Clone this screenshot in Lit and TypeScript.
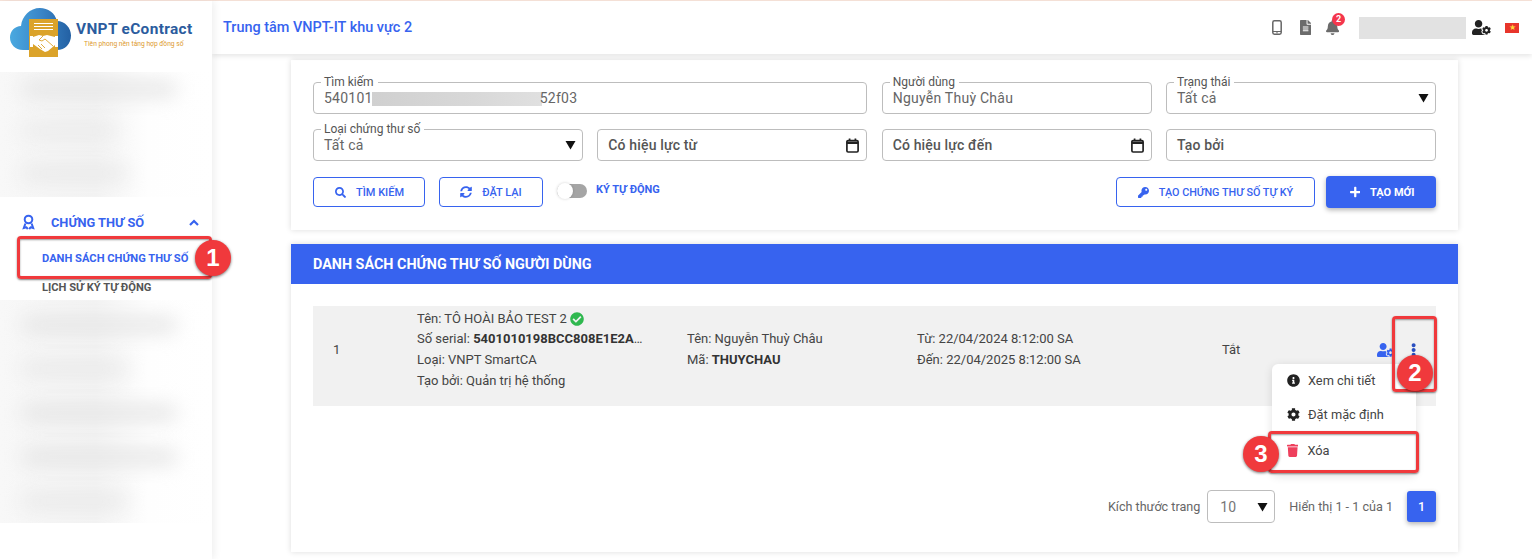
import { LitElement, html, css, svg } from "lit";
import { customElement } from "lit/decorators.js";

const P: Record<string, [number, string]> = {
  search: [512, "M505 442.7L405.3 343c-4.5-4.5-10.6-7-17-7H372c27.6-35.3 44-79.7 44-128C416 93.1 322.9 0 208 0S0 93.1 0 208s93.1 208 208 208c48.3 0 92.7-16.4 128-44v16.3c0 6.4 2.5 12.5 7 17l99.7 99.7c9.4 9.4 24.6 9.4 33.9 0l28.3-28.3c9.4-9.4 9.4-24.6.1-34zM208 336c-70.7 0-128-57.2-128-128 0-70.7 57.2-128 128-128 70.7 0 128 57.2 128 128 0 70.7-57.2 128-128 128z"],
  plus: [448, "M416 208H272V64c0-17.67-14.33-32-32-32h-32c-17.67 0-32 14.33-32 32v144H32c-17.67 0-32 14.33-32 32v32c0 17.67 14.33 32 32 32h144v144c0 17.67 14.33 32 32 32h32c17.67 0 32-14.33 32-32V304h144c17.67 0 32-14.33 32-32v-32c0-17.67-14.33-32-32-32z"],
  check: [512, "M504 256c0 136.967-111.033 248-248 248S8 392.967 8 256 119.033 8 256 8s248 111.033 248 248zM227.314 387.314l184-184c6.248-6.248 6.248-16.379 0-22.627l-22.627-22.627c-6.248-6.249-16.379-6.249-22.628 0L216 308.118l-70.059-70.059c-6.248-6.248-16.379-6.248-22.628 0l-22.627 22.627c-6.248 6.248-6.248 16.379 0 22.627l104 104c6.249 6.249 16.379 6.249 22.628.001z"],
  info: [512, "M256 8C119.043 8 8 119.083 8 256c0 136.997 111.043 248 248 248s248-111.003 248-248C504 119.083 392.957 8 256 8zm0 110c23.196 0 42 18.804 42 42s-18.804 42-42 42-42-18.804-42-42 18.804-42 42-42zm56 254c0 6.627-5.373 12-12 12h-88c-6.627 0-12-5.373-12-12v-24c0-6.627 5.373-12 12-12h12v-64h-12c-6.627 0-12-5.373-12-12v-24c0-6.627 5.373-12 12-12h64c6.627 0 12 5.373 12 12v100h12c6.627 0 12 5.373 12 12v24z"],
  trash: [448, "M432 32H312l-9.4-18.7A24 24 0 0 0 281.1 0H166.8a23.72 23.72 0 0 0-21.4 13.3L136 32H16A16 16 0 0 0 0 48v32a16 16 0 0 0 16 16h416a16 16 0 0 0 16-16V48a16 16 0 0 0-16-16zM53.2 467a48 48 0 0 0 47.9 45h245.8a48 48 0 0 0 47.9-45L416 128H32z"],
  dots: [192, "M96 184c39.8 0 72 32.2 72 72s-32.2 72-72 72-72-32.2-72-72 32.2-72 72-72zM24 80c0 39.8 32.2 72 72 72s72-32.2 72-72S135.8 8 96 8 24 40.2 24 80zm0 352c0 39.8 32.2 72 72 72s72-32.2 72-72-32.2-72-72-72-72 32.2-72 72z"],
  cog: [512, "M487.4 315.7l-42.6-24.6c4.3-23.2 4.3-47 0-70.2l42.6-24.6c4.9-2.8 7.1-8.6 5.5-14-11.1-35.6-30-67.8-54.7-94.6-3.8-4.1-10-5.1-14.8-2.3L380.8 110c-17.9-15.4-38.5-27.3-60.8-35.1V25.8c0-5.6-3.9-10.5-9.4-11.7-36.7-8.2-74.3-7.8-109.2 0-5.5 1.2-9.4 6.1-9.4 11.7V75c-22.2 7.9-42.8 19.8-60.8 35.1L88.7 85.5c-4.9-2.8-11-1.9-14.8 2.3-24.7 26.7-43.6 58.9-54.7 94.6-1.7 5.4.6 11.2 5.5 14L67.3 221c-4.3 23.2-4.3 47 0 70.2l-42.6 24.6c-4.9 2.8-7.1 8.6-5.5 14 11.1 35.6 30 67.8 54.7 94.6 3.8 4.1 10 5.1 14.8 2.3l42.6-24.6c17.9 15.4 38.5 27.3 60.8 35.1v49.2c0 5.6 3.9 10.5 9.4 11.7 36.7 8.2 74.3 7.8 109.2 0 5.5-1.2 9.4-6.1 9.4-11.7v-49.2c22.2-7.9 42.8-19.8 60.8-35.1l42.6 24.6c4.9 2.8 11 1.9 14.8-2.3 24.7-26.7 43.6-58.9 54.7-94.6 1.5-5.5-.7-11.3-5.6-14.1zM256 336c-44.1 0-80-35.9-80-80s35.9-80 80-80 80 35.9 80 80-35.9 80-80 80z"],
  sync: [512, "M370.72 133.28C339.458 104.008 298.888 87.962 255.848 88c-77.458.068-144.328 53.178-162.791 126.85-1.344 5.363-6.122 9.15-11.651 9.15H24.103c-7.498 0-13.194-6.807-11.807-14.176C33.933 94.924 134.813 8 256 8c66.448 0 126.791 26.136 171.315 68.685L463.03 40.97C478.149 25.851 504 36.559 504 57.941V192c0 13.255-10.745 24-24 24H345.941c-21.382 0-32.09-25.851-16.971-40.971l41.75-41.749zM32 296h134.059c21.382 0 32.09 25.851 16.971 40.971l-41.75 41.75c31.262 29.273 71.835 45.319 114.876 45.28 77.418-.07 144.315-53.144 162.787-126.849 1.344-5.363 6.122-9.15 11.651-9.15h57.304c7.498 0 13.194 6.807 11.807 14.176C478.067 417.076 377.187 504 256 504c-66.448 0-126.791-26.136-171.315-68.685L48.97 471.03C33.851 486.149 8 475.441 8 454.059V320c0-13.255 10.745-24 24-24z"],
  key: [512, "M512 176.001C512 273.203 433.202 352 336 352c-11.22 0-22.19-1.062-32.827-3.069l-24.012 27.014A23.999 23.999 0 0 1 261.223 384H224v40c0 13.255-10.745 24-24 24h-40v40c0 13.255-10.745 24-24 24H24c-13.255 0-24-10.745-24-24v-78.059c0-6.365 2.529-12.47 7.029-16.971l161.802-161.802C163.108 213.814 160 195.271 160 176 160 78.798 238.797.001 335.999 0 433.488-.001 512 78.511 512 176.001zM336 128c0 26.51 21.49 48 48 48s48-21.49 48-48-21.49-48-48-48-48 21.49-48 48z"],
  usercog: [640, "M610.5 373.3c2.6-14.1 2.6-28.5 0-42.6l25.8-14.9c3-1.7 4.3-5.2 3.3-8.5-6.7-21.5-18.2-41-33.2-57.1-2.3-2.5-6-3.1-9-1.4l-25.8 14.9c-10.9-9.3-23.4-16.5-36.9-21.3v-29.8c0-3.4-2.4-6.4-5.7-7.1-22.3-5-45-4.8-66.2 0-3.3.7-5.7 3.7-5.7 7.1v29.8c-13.5 4.8-26 12-36.9 21.3l-25.8-14.9c-2.9-1.7-6.7-1.1-9 1.4-15 16.1-26.5 35.6-33.2 57.1-1 3.3.4 6.8 3.3 8.5l25.8 14.9c-2.6 14.1-2.6 28.5 0 42.6l-25.8 14.9c-3 1.7-4.3 5.2-3.3 8.5 6.7 21.5 18.2 41 33.2 57.1 2.3 2.5 6 3.1 9 1.4l25.8-14.9c10.9 9.3 23.4 16.5 36.9 21.3v29.8c0 3.4 2.4 6.4 5.7 7.1 22.3 5 45 4.8 66.2 0 3.3-.7 5.7-3.7 5.7-7.1v-29.8c13.5-4.8 26-12 36.9-21.3l25.8 14.9c2.9 1.7 6.7 1.1 9-1.4 15-16.1 26.5-35.6 33.2-57.1 1-3.3-.4-6.8-3.3-8.5l-25.8-14.9zM496 400.5c-26.8 0-48.5-21.8-48.5-48.5s21.8-48.5 48.5-48.5 48.5 21.8 48.5 48.5-21.7 48.5-48.5 48.5zM224 256c70.7 0 128-57.3 128-128S294.7 0 224 0 96 57.3 96 128s57.3 128 128 128zm201.2 226.5c-2.3 0-4.6-.7-6.6-1.9l-7.9 4.6c-6 3.4-12.8 5.3-19.6 5.3-10.9 0-21.4-4.6-28.9-12.6-18.3-19.8-32.3-43.9-40.2-69.6-5.5-17.7 1.9-36.4 17.9-45.7l7.9-4.6c-.1-2.6-.1-5.2 0-7.8l-7.9-4.6c-16-9.2-23.4-28-17.9-45.7.9-2.9 2.2-5.8 3.2-8.7-3.8-.3-7.5-1.2-11.4-1.2h-16.7c-22.2 10.2-46.9 16-72.9 16s-50.6-5.8-72.9-16h-16.7C60.2 288 0 348.2 0 422.4V464c0 26.5 21.5 48 48 48h352c10.1 0 19.5-3.2 27.2-8.5-1.2-3.8-2-7.7-2-11.8v-9.2z"],
  bell: [448, "M224 512c35.32 0 63.97-28.65 63.97-64H160.03c0 35.35 28.65 64 63.97 64zm215.39-149.71c-19.32-20.76-55.47-51.99-55.47-154.29 0-77.7-54.48-139.9-127.94-155.16V32c0-17.67-14.32-32-31.98-32s-31.98 14.33-31.98 32v20.84C118.56 68.1 64.08 130.3 64.08 208c0 102.3-36.15 133.53-55.47 154.29-6 6.45-8.66 14.16-8.61 21.71.11 16.4 12.98 32 32.1 32h383.8c19.12 0 32-15.6 32.1-32 .05-7.55-2.61-15.27-8.61-21.71z"],
  file: [384, "M224 136V0H24C10.7 0 0 10.7 0 24v464c0 13.3 10.7 24 24 24h336c13.3 0 24-10.7 24-24V160H248c-13.2 0-24-10.8-24-24zm64 236c0 6.6-5.4 12-12 12H108c-6.6 0-12-5.4-12-12v-8c0-6.6 5.4-12 12-12h168c6.6 0 12 5.4 12 12v8zm0-64c0 6.6-5.4 12-12 12H108c-6.6 0-12-5.4-12-12v-8c0-6.6 5.4-12 12-12h168c6.6 0 12 5.4 12 12v8zm0-72v8c0 6.6-5.4 12-12 12H108c-6.6 0-12-5.4-12-12v-8c0-6.6 5.4-12 12-12h168c6.6 0 12 5.4 12 12zm96-114.1v6.1H256V0h6.1c6.4 0 12.5 2.5 17 7l97.9 98c4.5 4.5 7 10.6 7 16.9z"],
};

const ic = (name: string, size: number, color: string) => {
  const [w, d] = P[name];
  return html`<svg class="ic" width=${(size * w) / 512} height=${size} viewBox="0 0 ${w} 512" fill=${color}>${svg`<path d=${d}></path>`}</svg>`;
};

const caret = html`<svg class="caret" width="11" height="10" viewBox="0 0 11 10"><path d="M0.5 1h10L5.5 9.5z" fill="#111"></path></svg>`;
const cal = html`<svg class="cal" width="13" height="15" viewBox="0 0 13 15" fill="none" stroke="#222" stroke-width="1.7"><rect x=".9" y="2.6" width="11.2" height="11.4" rx="1.2"></rect><path d="M.9 4.8h11.2" stroke-width="2.4"></path><path d="M3.6.4v2.6M9.4.4v2.6"></path></svg>`;

const logo = html`<svg class="logo" width="62" height="52" viewBox="0 0 62 52">
  <defs><linearGradient id="cl" x1="0" x2="1" y1="0" y2="0"><stop offset="0" stop-color="#4aa9e0"></stop><stop offset=".5" stop-color="#3a86c8"></stop><stop offset="1" stop-color="#2360a3"></stop></linearGradient></defs>
  <path d="M13 42C5 42 0 36 0 29.5 0 23 5 18 11 18 12 8 20 0 30 0c8 0 15 5 17 13 8 0 14 7 14 14.5C61 36 55 42 47 42z" fill="url(#cl)"></path>
  <rect x="19" y="11" width="29" height="38" fill="#dba32a"></rect>
  <path d="M24 15.5h19M24 18.5h19M24 21.5h19" stroke="#fff" stroke-width="1"></path>
  <path d="M20 28h3v11h-3zM45 28h3v11h-3z" fill="#fff"></path>
  <path d="M23 29l6-2 4 1 4-1 8 2v8l-7 6-3 1-5-3-7-5z" fill="#fff"></path>
  <path d="M33 28l-4 4 3 1 3-2 8 7M31 36l4 4M28 37l4 4" stroke="#dba32a" stroke-width=".9" fill="none"></path>
</svg>`;

@customElement("app-root")
export class AppRoot extends LitElement {
  static styles = css`
    :host { display: block; width: 1532px; height: 559px; position: relative; overflow: hidden; background: #fff; font-family: Roboto, "Noto Sans", sans-serif; color: #444; }
    * { box-sizing: border-box; }
    .ic { display: block; flex: none; }
    .strip { height: 1px; background: #f8e4da; }
    .page { display: flex; height: 558px; }

    .side { width: 212px; flex: none; display: flex; flex-direction: column; box-shadow: 2px 0 8px rgba(0,0,0,.07); position: relative; z-index: 2; background: #fff; }
    .brand { height: 71px; display: flex; gap: 4px; padding: 7px 0 0 10px; }
    .brand-text { padding-top: 13px; }
    .brand-name { font-size: 15.4px; font-weight: 700; letter-spacing: .35px; color: #2b5c9e; line-height: 16px; white-space: nowrap; }
    .brand-tag { font-size: 6.7px; color: #dd9a2e; line-height: 9px; margin: 3px 0 0 8px; white-space: nowrap; }
    .blur { overflow: hidden; display: flex; flex-direction: column; flex: none; background: linear-gradient(90deg, #f8f8f8, #f4f4f4 45%, #fefefe 70%, #fff); }
    .blur-a { height: 125px; padding-top: 10px; gap: 28px; }
    .blur-b { height: 223px; padding-top: 18px; gap: 30px; }
    .smudge { height: 14px; flex: none; border-radius: 7px; background: #e2e2e2; filter: blur(10px); margin-left: 22px; }
    .s-a { width: 155px; }
    .s-b { width: 95px; background: #e9e9e9; }
    .s-c { width: 105px; background: #e7e7e7; }
    .menu-group { height: 103px; padding-top: 15px; background: #fff; flex: none; }
    .mg-head { display: flex; align-items: center; height: 20px; padding: 0 13px 0 22px; color: #3763ef; font-size: 12.8px; font-weight: 700; }
    .mg-head span { margin-left: 16px; flex: 1; }
    .sub { font-size: 11.15px; font-weight: 700; padding-left: 42px; white-space: nowrap; line-height: 14px; }
    .sub.on { color: #3763ef; margin-top: 20px; }
    .sub.off { color: #555; margin-top: 15px; }

    .main { flex: 1; min-width: 0; display: flex; flex-direction: column; }
    .top { height: 53px; flex: none; display: flex; align-items: center; padding: 0 13px 0 11px; background: #fff; box-shadow: 0 2px 5px rgba(0,0,0,.1); position: relative; z-index: 1; }
    .org { flex: 1; color: #3763ef; font-size: 14.45px; font-weight: 500; }
    .top-i { display: flex; align-items: center; }
    .phone { margin-right: 18px; }
    .bellwrap { position: relative; margin: 0 20px 0 15px; }
    .badge { position: absolute; left: 6px; top: -7px; width: 13px; height: 13px; border-radius: 50%; background: #f4364c; color: #fff; font-size: 9px; font-weight: 700; text-align: center; line-height: 13px; }
    .who { width: 107px; height: 22px; background: #e2e2e2; margin-right: 6px; }
    .flag { width: 14px; height: 10px; background: #e8352b; margin-left: 14px; display: flex; align-items: center; justify-content: center; color: #ffd83a; font-size: 8px; line-height: 10px; }

    .content { flex: 1; padding: 6px 74px 0 79px; display: flex; flex-direction: column; gap: 14px; }
    .card { background: #fff; box-shadow: 0 0 6px rgba(0,0,0,.14); }
    .filter { height: 170px; padding: 22px 22px 0; }
    .grid { display: grid; grid-template-columns: repeat(4, 270px); column-gap: 14.33px; row-gap: 15px; }
    .f { height: 32px; border: 1px solid #bdbdbd; border-radius: 4px; position: relative; display: flex; align-items: center; padding: 0 6px 0 10px; font-size: 14px; letter-spacing: .25px; color: #666; justify-content: space-between; background: #fff; }
    .f.wide { grid-column: span 2; justify-content: flex-start; }
    .f.ph { font-weight: 500; letter-spacing: .15px; color: #555; padding-right: 7px; }
    .f label { position: absolute; left: 7px; top: -7px; font-size: 12px; line-height: 12px; letter-spacing: 0; color: #555; background: #fff; padding: 0 4px 0 3px; font-weight: 400; }
    .mask { display: inline-block; width: 170px; height: 14px; background: linear-gradient(90deg, #d0d0d0, #d8d8d8 60%, #e0e0e0); vertical-align: middle; margin: 0 -2px 0 -1px; }
    .acts { display: flex; align-items: flex-start; margin-top: 16px; gap: 14px; }
    .btn { height: 30px; border: 1px solid #3763ef; border-radius: 4px; background: #fff; color: #3763ef; display: flex; align-items: center; justify-content: center; gap: 10px; font-size: 11px; font-weight: 500; }
    .b1 { width: 112px; padding-left: 1px; }
    .b2 { width: 104px; }
    .b3 { width: 199px; margin-left: auto; font-size: 10.8px; }
    .b4 { width: 110px; height: 32px; margin: -1px 0 0 -3px; border: none; background: #3763ef; color: #fff; box-shadow: 0 2px 5px rgba(0,0,0,.3); padding-left: 2px; font-weight: 700; }
    .toggle { width: 30px; height: 14px; background: #a5a5a5; border-radius: 7px; margin-top: 7px; position: relative; }
    .knob { position: absolute; left: 0; top: -1px; width: 16px; height: 16px; border-radius: 50%; background: #fff; box-shadow: 0 0 3px rgba(0,0,0,.18); }
    .autos { color: #3763ef; font-size: 11px; font-weight: 700; margin: 7px 0 0 -5px; line-height: 12px; }

    .list { height: 308px; position: relative; }
    .list-head { height: 40px; background: #3763ef; color: #fff; font-size: 14.35px; font-weight: 700; display: flex; align-items: center; padding-left: 22px; }
    .list-body { padding: 22px 22px 0; }
    .row { height: 100px; background: #f1f1f1; display: grid; grid-template-columns: 104px 270px 230px 305px 1fr; align-items: center; font-size: 13px; color: #444; line-height: 20.7px; padding-bottom: 12px; }
    .row b { color: #333; font-weight: 700; }
    .idx { padding-left: 20px; }
    .name { display: flex; align-items: center; gap: 3px; }
    .serial { white-space: nowrap; }
    .state { display: flex; align-items: center; }
    .state span { flex: 1; }
    .row-ic { display: flex; align-items: center; gap: 16px; margin-right: 20px; }
    .pager { display: flex; align-items: center; justify-content: flex-end; margin-top: 84px; font-size: 12.6px; color: #666; }
    .psel { width: 68px; height: 33px; border: 1px solid #bdbdbd; border-radius: 4px; margin: 0 14px 0 7px; display: flex; align-items: center; justify-content: space-between; padding: 0 6px 0 12px; font-size: 14px; color: #777; }
    .pnum { width: 29px; height: 31px; background: #3763ef; color: #fff; border-radius: 3px; margin-left: 14px; display: flex; align-items: center; justify-content: center; font-weight: 500; box-shadow: 0 2px 5px rgba(0,0,0,.3); }

    .pop { position: absolute; left: 981px; top: 120px; width: 144px; height: 110px; background: #fff; border-radius: 6px; box-shadow: 0 2px 10px rgba(0,0,0,.12); font-size: 12.8px; color: #444; z-index: 3; }
    .pop-i { display: flex; align-items: center; gap: 8px; height: 34px; padding-left: 15px; }
    .pop-i:first-child { height: 33px; }
    .pop-i.del { height: 39px; gap: 9px; }

    .mark { position: absolute; border: 3px solid #f0393c; border-radius: 4px; box-shadow: 0 1px 2px rgba(0,0,0,.5), inset 0 1px 2px rgba(0,0,0,.4); z-index: 5; }
    .m1 { left: 17px; top: 236px; width: 195px; height: 43px; }
    .m2 { left: 1392px; top: 316px; width: 45px; height: 76px; }
    .m3 { left: 1268px; top: 431px; width: 151px; height: 42px; }
    .num { position: absolute; width: 36px; height: 36px; border-radius: 50%; background: #f0393c; color: #fff; font-size: 24px; font-family: "Liberation Sans", Arial, sans-serif; font-weight: 700; display: flex; align-items: center; justify-content: center; box-shadow: 0 1px 3px rgba(0,0,0,.55); z-index: 6; }
    .n1 { left: 195px; top: 240px; }
    .n2 { left: 1397px; top: 355px; }
    .n3 { left: 1243px; top: 436px; }
  `;

  render() {
    return html`
      <div class="strip"></div>
      <div class="page">
        <aside class="side">
          <div class="brand">
            ${logo}
            <div class="brand-text">
              <div class="brand-name">VNPT eContract</div>
              <div class="brand-tag">Tiên phong nền tảng hợp đồng số</div>
            </div>
          </div>
          <div class="blur blur-a"><div class="smudge s-a"></div><div class="smudge s-b"></div><div class="smudge s-c"></div></div>
          <div class="menu-group">
            <div class="mg-head">
              <svg width="13" height="16" viewBox="0 0 13 16" fill="none" stroke="#3763ef" stroke-width="2"><circle cx="6.5" cy="5.5" r="3.8"></circle><path d="M3.4 9.5L1.8 14l2.6-.6 1.4 1.6M9.6 9.5l1.6 4.5-2.6-.6L7.2 15"></path></svg>
              <span>CHỨNG THƯ SỐ</span>
              <svg width="10" height="7" viewBox="0 0 10 7" fill="none" stroke="#3763ef" stroke-width="2.2"><path d="M1 6l4-4 4 4"></path></svg>
            </div>
            <div class="sub on">DANH SÁCH CHỨNG THƯ SỐ</div>
            <div class="sub off">LỊCH SỬ KÝ TỰ ĐỘNG</div>
          </div>
          <div class="blur blur-b"><div class="smudge s-a"></div><div class="smudge s-c"></div><div class="smudge s-a"></div><div class="smudge s-a"></div><div class="smudge s-c"></div></div>
        </aside>

        <div class="main">
          <header class="top">
            <div class="org">Trung tâm VNPT-IT khu vực 2</div>
            <div class="top-i">
              <svg class="phone" width="10" height="15" viewBox="0 0 10 15" fill="none" stroke="#666" stroke-width="1.5"><rect x=".8" y=".8" width="8.4" height="13.4" rx="1.6"></rect><path d="M1 11.5h8" stroke-width="1"></path><circle cx="5" cy="12.7" r=".7" fill="#666" stroke="none"></circle></svg>
              ${ic("file", 15, "#6b6b6b")}
              <div class="bellwrap">${ic("bell", 15, "#6b6b6b")}<span class="badge">2</span></div>
              <div class="who"></div>
              ${ic("usercog", 15, "#222")}
              <div class="flag">★</div>
            </div>
          </header>

          <div class="content">
            <section class="card filter">
              <div class="grid">
                <div class="f wide"><label>Tìm kiếm</label><span>540101<span class="mask"></span>52f03</span></div>
                <div class="f"><label>Người dùng</label><span>Nguyễn Thuỳ Châu</span></div>
                <div class="f"><label>Trạng thái</label><span>Tất cả</span>${caret}</div>
                <div class="f"><label>Loại chứng thư số</label><span>Tất cả</span>${caret}</div>
                <div class="f ph"><span>Có hiệu lực từ</span>${cal}</div>
                <div class="f ph"><span>Có hiệu lực đến</span>${cal}</div>
                <div class="f ph"><span>Tạo bởi</span></div>
              </div>
              <div class="acts">
                <div class="btn b1">${ic("search", 11, "#3763ef")}<span>TÌM KIẾM</span></div>
                <div class="btn b2">${ic("sync", 12, "#3763ef")}<span>ĐẶT LẠI</span></div>
                <div class="toggle"><div class="knob"></div></div>
                <div class="autos">KÝ TỰ ĐỘNG</div>
                <div class="btn b3">${ic("key", 11, "#3763ef")}<span>TẠO CHỨNG THƯ SỐ TỰ KÝ</span></div>
                <div class="btn b4">${ic("plus", 12, "#fff")}<span>TẠO MỚI</span></div>
              </div>
            </section>

            <section class="card list">
              <div class="list-head">DANH SÁCH CHỨNG THƯ SỐ NGƯỜI DÙNG</div>
              <div class="list-body">
                <div class="row">
                  <div class="idx">1</div>
                  <div>
                    <div class="name">Tên: TÔ HOÀI BẢO TEST 2 ${ic("check", 14, "#2fb84f")}</div>
                    <div class="serial">Số serial: <b>5401010198BCC808E1E2A</b>…</div>
                    <div>Loại: VNPT SmartCA</div>
                    <div>Tạo bởi: Quản trị hệ thống</div>
                  </div>
                  <div><div>Tên: Nguyễn Thuỳ Châu</div><div>Mã: <b>THUYCHAU</b></div></div>
                  <div><div>Từ: 22/04/2024 8:12:00 SA</div><div>Đến: 22/04/2025 8:12:00 SA</div></div>
                  <div class="state"><span>Tắt</span><div class="row-ic">${ic("usercog", 14, "#3763ef")}${ic("dots", 14, "#2a4fc0")}</div></div>
                </div>
                <div class="pager">
                  <span>Kích thước trang</span>
                  <div class="psel"><span>10</span>${caret}</div>
                  <span>Hiển thị 1 - 1 của 1</span>
                  <div class="pnum">1</div>
                </div>
              </div>
              <div class="pop">
                <div class="pop-i">${ic("info", 13, "#222")}<span>Xem chi tiết</span></div>
                <div class="pop-i">${ic("cog", 13, "#222")}<span>Đặt mặc định</span></div>
                <div class="pop-i del">${ic("trash", 13, "#ee3f5c")}<span>Xóa</span></div>
              </div>
            </section>
          </div>
        </div>
      </div>

      <div class="mark m1"></div><div class="num n1">1</div>
      <div class="mark m2"></div><div class="num n2">2</div>
      <div class="mark m3"></div><div class="num n3">3</div>
    `;
  }
}
